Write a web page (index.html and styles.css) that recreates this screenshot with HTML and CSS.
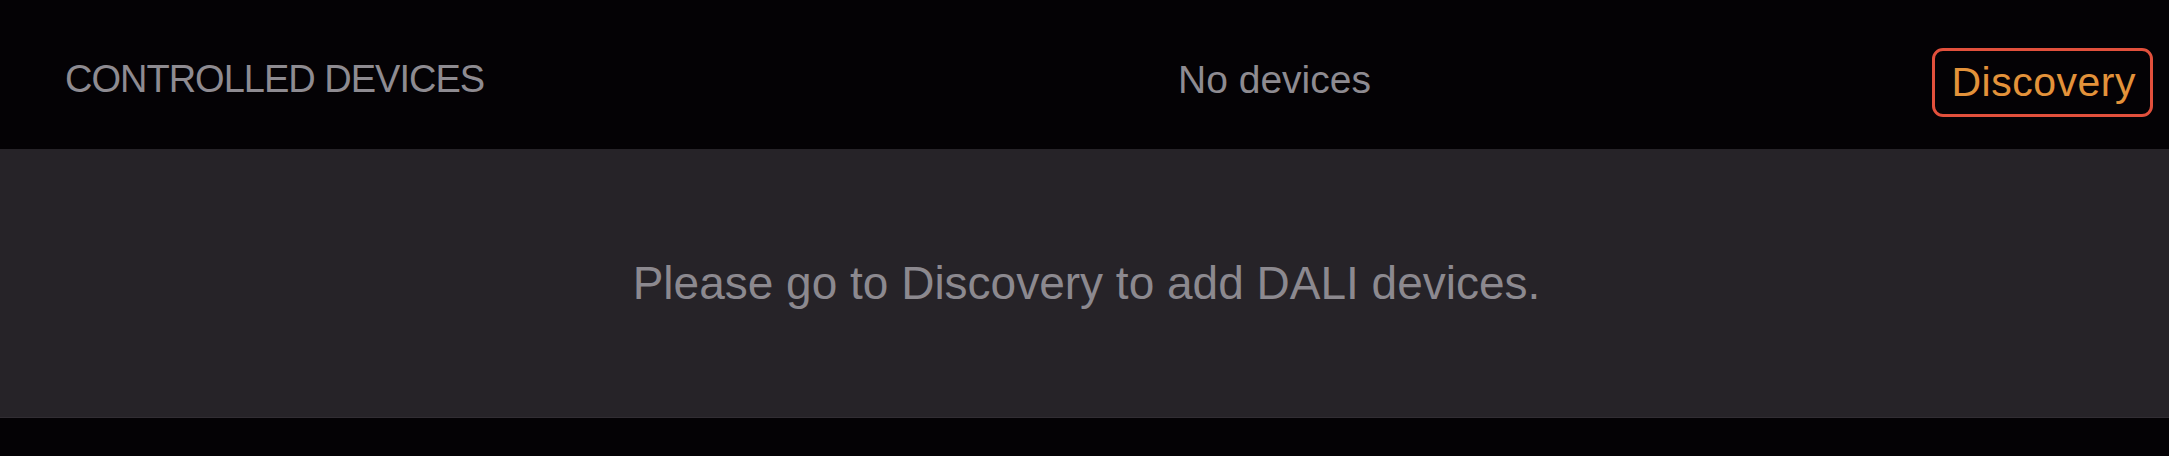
FILE: index.html
```html
<!DOCTYPE html>
<html lang="en">
<head>
<meta charset="utf-8">
<title>Controlled Devices</title>
<link rel="stylesheet" href="styles.css">
</head>
<body>
  <header class="bar">
    <div class="bar-title">CONTROLLED DEVICES</div>
    <div class="bar-status">No devices</div>
    <button class="discovery-btn" type="button">Discovery</button>
  </header>
  <section class="panel">
    <p class="panel-msg">Please go to Discovery to add DALI devices.</p>
  </section>
  <footer class="foot"></footer>
</body>
</html>
```

FILE: styles.css
```css
html, body {
  margin: 0;
  padding: 0;
}
body {
  background: #040205;
  font-family: "Liberation Sans", Arial, sans-serif;
  width: 2169px;
  height: 456px;
  overflow: hidden;
}
.bar {
  height: 149px;
  box-sizing: border-box;
  padding: 10px 16px 0 65px;
  display: grid;
  grid-template-columns: 1113px 1fr auto;
  align-items: center;
  background: #040205;
}
.bar-title {
  color: #8e8b91;
  font-size: 38px;
  letter-spacing: -1px;
}
.bar-status {
  color: #8e8b91;
  font-size: 39px;
}
.discovery-btn {
  margin-top: 6px;
  background: transparent;
  border: 3px solid #e2503c;
  border-radius: 11px;
  color: #e3923a;
  font-family: "Liberation Sans", Arial, sans-serif;
  font-size: 41px;
  letter-spacing: 0.5px;
  line-height: 63px;
  height: 69px;
  padding: 0 14px 0 17px;
  box-sizing: border-box;
}
.panel {
  height: 269px;
  background: #262328;
  border-bottom: 1px solid #312d33;
  box-sizing: border-box;
  display: flex;
  align-items: center;
  justify-content: center;
}
.panel-msg {
  margin: 0;
  color: #8c898f;
  font-size: 46px;
  position: relative;
  left: 2px;
}
.foot {
  height: 38px;
  background: #040205;
}
```
